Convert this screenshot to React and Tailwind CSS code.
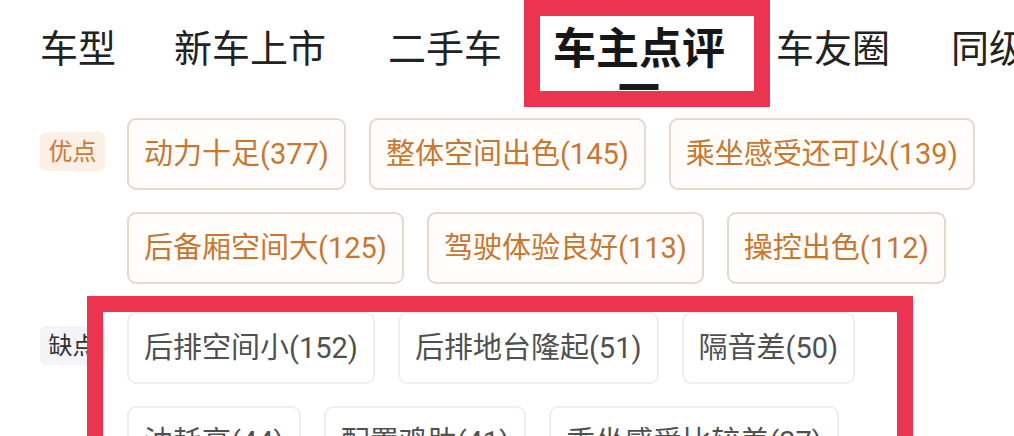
const font = { fontFamily: 'Roboto, "Noto Sans CJK SC", sans-serif' };

const tabs = [
  { label: '车型', cls: 'ml-[40px]' },
  { label: '新车上市', cls: 'ml-[58px]' },
  { label: '二手车', cls: 'ml-[62px]' },
  { label: '车主点评', cls: 'ml-[51px]', active: true },
  { label: '车友圈', cls: 'ml-[51px]' },
  { label: '同级车', cls: 'ml-[61px]' },
];

const pros = [
  '动力十足(377)',
  '整体空间出色(145)',
  '乘坐感受还可以(139)',
  '后备厢空间大(125)',
  '驾驶体验良好(113)',
  '操控出色(112)',
];

const cons = [
  '后排空间小(152)',
  '后排地台隆起(51)',
  '隔音差(50)',
  '油耗高(44)',
  '配置鸡肋(41)',
  '乘坐感受比较差(37)',
];

const Section = ({ label, items, good }) => (
  <div className="flex pl-[40px]">
    <div
      className={`mt-[14px] h-[39px] w-[65px] shrink-0 flex items-center justify-center rounded-[6px] text-[24px] leading-none ${
        good ? 'bg-[#fcefe5] text-[#cd7834]' : 'bg-[#f3f4f8] text-[#333333]'
      }`}
    >
      {label}
    </div>
    <div className="ml-[22px] flex flex-1 flex-wrap gap-x-[23px] gap-y-[22px]">
      {items.map((t) => (
        <div
          key={t}
          className={`h-[72px] flex items-center px-[15px] rounded-[9px] border-2 text-[29px] leading-none whitespace-nowrap ${
            good
              ? 'border-[#e6d8ca] text-[#c8772f] bg-[#fffdfb]'
              : 'border-[#eeeeee] text-[#505050] bg-white'
          }`}
        >
          {t}
        </div>
      ))}
    </div>
  </div>
);

export default function App() {
  return (
    <div className="relative w-[1014px] h-[436px] overflow-hidden bg-white" style={font}>
      {/* tab bar */}
      <div className="flex items-center h-[98px] whitespace-nowrap">
        {tabs.map((t) => (
          <div key={t.label} className={`relative shrink-0 ${t.cls}`}>
            <span
              className={
                t.active
                  ? 'text-[43px] font-bold leading-none text-[#161616]'
                  : 'text-[38px] leading-none text-[#222222]'
              }
            >
              {t.label}
            </span>
            {t.active && (
              <div className="absolute left-1/2 -translate-x-1/2 top-[56px] w-[39px] h-[6px] bg-[#1a1a1a]" />
            )}
          </div>
        ))}
      </div>

      <div className="pt-[20px] flex flex-col gap-[28px]">
        <Section label="优点" items={pros} good />
        <Section label="缺点" items={cons} />
      </div>

      {/* annotation boxes */}
      <div className="absolute left-[524px] top-0 w-[246px] h-[107px] border-[16px] border-[#ec3450]" />
      <div className="absolute left-[87px] top-[296px] w-[826px] h-[200px] border-[16px] border-[#ec3450]" />
    </div>
  );
}
